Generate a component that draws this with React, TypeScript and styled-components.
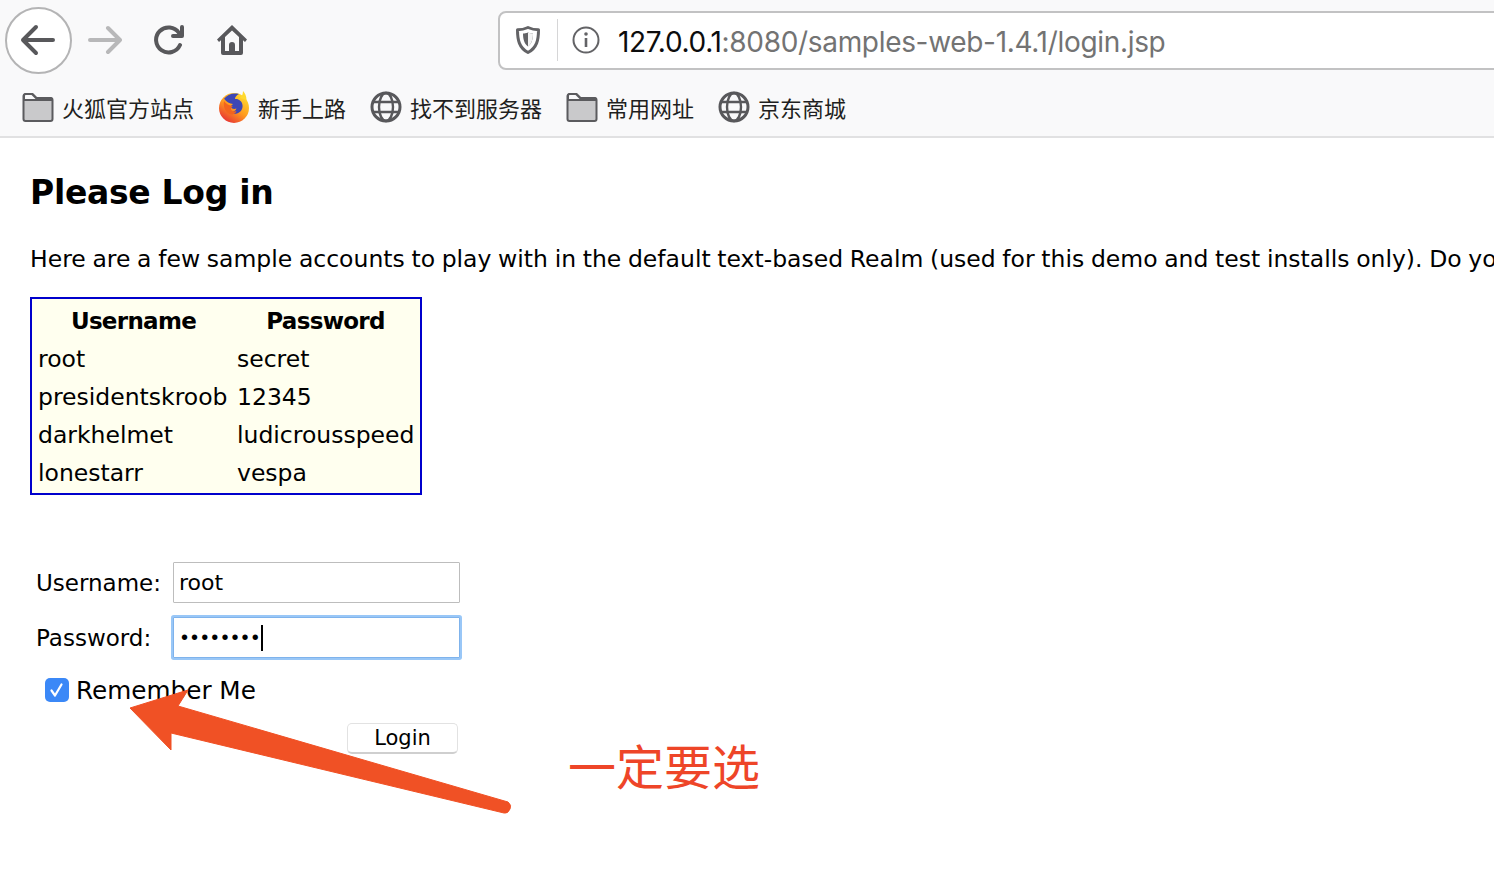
import styled, { createGlobalStyle } from "styled-components";

const accounts = [
  ["root", "secret"],
  ["presidentskroob", "12345"],
  ["darkhelmet", "ludicrousspeed"],
  ["lonestarr", "vespa"],
];

const bookmarks = [
  { icon: "folder", label: "火狐官方站点" },
  { icon: "firefox", label: "新手上路" },
  { icon: "globe", label: "找不到服务器" },
  { icon: "folder", label: "常用网址" },
  { icon: "globe", label: "京东商城" },
];

const FolderIcon = () => (
  <svg width="32" height="30" viewBox="0 0 32 30">
    <path
      d="M1.5 4a2 2 0 0 1 2-2h7l4 4h14a2 2 0 0 1 2 2v19a2 2 0 0 1-2 2h-25a2 2 0 0 1-2-2z"
      fill="#c9c9cb"
      stroke="#5b5b5e"
      strokeWidth="2"
      strokeLinejoin="round"
    />
    <path d="M2 8h28v-.5a2 2 0 0 0-2-1.500h-14l-4-4h-6.500a2 2 0 0 0-1.500 2z" fill="#f9f9fa" stroke="#5b5b5e" strokeWidth="2" strokeLinejoin="round" />
  </svg>
);

const GlobeIcon = () => (
  <svg width="32" height="32" viewBox="0 0 32 32" fill="none" stroke="#58585b" strokeWidth="3">
    <circle cx="16" cy="16" r="14" />
    <ellipse cx="16" cy="16" rx="7" ry="14" strokeWidth="2.4" />
    <path d="M3 11h26M3 21h26" strokeWidth="2.4" />
  </svg>
);

const FirefoxIcon = () => (
  <FoxSvg width="30" height="32" viewBox="0 0 30 32">
    <defs>
      <linearGradient id="foxBody" x1="0.85" y1="0.1" x2="0.25" y2="1">
        <stop offset="0" stopColor="#ffd92e" />
        <stop offset="0.5" stopColor="#ff9a1f" />
        <stop offset="1" stopColor="#e62f35" />
      </linearGradient>
    </defs>
    <circle cx="15" cy="17" r="15" fill="url(#foxBody)" />
    <path d="M24 0c2 2 3.500 5 3.500 9L21 7c2-2 3-4 3-7z" fill="#ffd92e" />
    <path d="M5 8C8 3.500 14 1.500 20 3c-2.500 1-4 3-4 5 3.500-.5 7 2 7.500 6 .5 4-2 7.500-5.500 8.500-3 .8-6 0-7.500-2 3 1 6 0 7-3-2 1-5 .5-5.500-1.500-.3-1.500 1-2 2-3-3-.5-7-2-9-5.500z" fill="#3d47b5" />
    <path d="M5 10c2 3 5 4.500 9 5-1.500 1-2.500 2-2 3.500.5 2 3.500 2.500 5.500 1.500-1 3-4 4-7 3C6 21 4 15 5 10z" fill="#f2641e" />
  </FoxSvg>
);

export default function App() {
  return (
    <>
      <GlobalStyle />
      <BrowserChrome>
        <NavRow>
          <BackButton>
            <svg width="36" height="32" viewBox="0 0 36 32" fill="none" stroke="#58585b" strokeWidth="4" strokeLinecap="round" strokeLinejoin="round">
              <path d="M33 16H3M16 3 3 16l13 13" />
            </svg>
          </BackButton>
          <ForwardIcon width="34" height="30" viewBox="0 0 34 30" fill="none" stroke="#b8b8b9" strokeWidth="4" strokeLinecap="round" strokeLinejoin="round">
            <path d="M2 15h30M20 3l12 12-12 12" />
          </ForwardIcon>
          <ReloadIcon width="32" height="32" viewBox="0 0 32 32" fill="none" stroke="#58585b" strokeWidth="4" strokeLinecap="round" strokeLinejoin="round">
            <path d="M26 21a12.500 12.500 0 1 1-1-12l2 2.500" />
            <path d="M28 3v9h-9" fill="none" />
          </ReloadIcon>
          <HomeIcon width="32" height="32" viewBox="0 0 32 32">
            <path d="M16 1 1 15.500l2 2.500 2-1.700V29a2 2 0 0 0 2 2h18a2 2 0 0 0 2-2V16.300l2 1.700 2-2.500z" fill="#58585b" />
            <path d="M16 6.500 9 13v14h4v-6a3 3 0 0 1 6 0v6h4V13z" fill="#f9f9fa" />
            <rect x="14.500" y="20" width="3" height="3" fill="#58585b" />
          </HomeIcon>
          <UrlBar>
            <svg width="24" height="28" viewBox="0 0 24 28">
              <path d="M12 1.500c4 1.800 7 2.300 10.500 2.300 0 10-1.500 18-10.500 22.700C3 21.800 1.500 13.800 1.500 3.800 5 3.800 8 3.300 12 1.500z" fill="none" stroke="#636366" strokeWidth="3" strokeLinejoin="round" />
              <path d="M12 6.500c2 .8 3.500 1 5 1.100 0 5-1 10-5 13-4-3-5-8-5-13 1.500-.1 3-.3 5-1.100z" fill="#636366" />
              <path d="M12 6.500c2 .8 3.500 1 5 1.100 0 5-1 10-5 13z" fill="#f4f4f4" />
            </svg>
            <UrlDivider />
            <svg width="28" height="28" viewBox="0 0 28 28" fill="none" stroke="#636366" strokeWidth="2">
              <circle cx="14" cy="14" r="12.500" />
              <path d="M14 12v9" strokeWidth="2.600" />
              <circle cx="14" cy="8" r="1.800" fill="#636366" stroke="none" />
            </svg>
            <UrlText>
              <UrlHost>127.0.0.1</UrlHost>:8080/samples-web-1.4.1/login.jsp
            </UrlText>
          </UrlBar>
        </NavRow>
        <BookmarkRow>
          {bookmarks.map((b) => (
            <Bookmark key={b.label}>
              {b.icon === "folder" && <FolderIcon />}
              {b.icon === "firefox" && <FirefoxIcon />}
              {b.icon === "globe" && <GlobeIcon />}
              <span>{b.label}</span>
            </Bookmark>
          ))}
        </BookmarkRow>
      </BrowserChrome>

      <Content>
        <Title>Please Log in</Title>
        <Intro>
          Here are a few sample accounts to play with in the default text-based Realm (used for this demo and test installs only). Do yo
        </Intro>
        <AccountTable>
          <thead>
            <tr>
              <th>Username</th>
              <th>Password</th>
            </tr>
          </thead>
          <tbody>
            {accounts.map((a) => (
              <tr key={a[0]}>
                <td>{a[0]}</td>
                <td>{a[1]}</td>
              </tr>
            ))}
          </tbody>
        </AccountTable>

        <LoginForm>
          <FieldRow>
            <FieldLabel>Username:</FieldLabel>
            <TextBox>root</TextBox>
          </FieldRow>
          <FieldRow>
            <FieldLabel>Password:</FieldLabel>
            <TextBox $focused>
              <Dots>••••••••</Dots>
              <Caret />
            </TextBox>
          </FieldRow>
          <RememberRow>
            <CheckBox>
              <svg width="16" height="16" viewBox="0 0 16 16" fill="none" stroke="#fff" strokeWidth="2.200" strokeLinecap="round" strokeLinejoin="round">
                <path d="M2.500 8.500 6 13.500 12.500 2.500" />
              </svg>
            </CheckBox>
            <span>Remember Me</span>
          </RememberRow>
          <ButtonRow>
            <LoginButton>Login</LoginButton>
          </ButtonRow>
        </LoginForm>
      </Content>

      <ArrowOverlay width="400" height="140" viewBox="0 0 400 140">
        <path
          d="M0 20 58 2 48 18 378 114Q382 117 380 121 378 126 374 125L41 45V62z"
          fill="#f05125"
          stroke="#f05125"
          strokeWidth="1"
          strokeLinejoin="round"
        />
      </ArrowOverlay>
      <Annotation>一定要选</Annotation>
    </>
  );
}

const GlobalStyle = createGlobalStyle`
  html, body {
    margin: 0;
    padding: 0;
    background: #fff;
    height: 892px;
    overflow: hidden;
  }
  body {
    font-family: "DejaVu Sans", Verdana, sans-serif;
    color: #000;
    position: relative;
  }
`;

const BrowserChrome = styled.header`
  height: 136px;
  background: #f9f9fa;
  border-bottom: 2px solid #e1e1e2;
  overflow: hidden;
`;

const NavRow = styled.div`
  display: flex;
  align-items: center;
  height: 80px;
  padding-left: 5px;
`;

const BackButton = styled.div`
  flex: none;
  box-sizing: border-box;
  width: 67px;
  height: 67px;
  border: 2px solid #b4b4b5;
  border-radius: 50%;
  background: #fff;
  display: flex;
  align-items: center;
  justify-content: center;
  padding-right: 2px;
`;

const ForwardIcon = styled.svg`
  flex: none;
  margin-left: 16px;
`;

const ReloadIcon = styled.svg`
  flex: none;
  margin-left: 32px;
`;

const HomeIcon = styled.svg`
  flex: none;
  margin-left: 30px;
`;

const UrlBar = styled.div`
  flex: none;
  box-sizing: border-box;
  width: 1100px;
  height: 59px;
  margin-left: 250px;
  border: 2px solid #c2c2c3;
  border-radius: 8px;
  background: #fff;
  display: flex;
  align-items: center;
  padding-left: 16px;
`;

const UrlDivider = styled.div`
  width: 1px;
  height: 42px;
  background: #d6d6d7;
  margin: 0 14px 0 17px;
`;

const UrlText = styled.div`
  margin-left: 18px;
  padding-top: 4px;
  font-family: "Inter", "Liberation Sans", sans-serif;
  font-size: 28px;
  letter-spacing: -0.32px;
  color: #737373;
  white-space: nowrap;
`;

const UrlHost = styled.span`
  color: #0c0c0d;
`;

const BookmarkRow = styled.nav`
  display: flex;
  align-items: center;
  gap: 24px;
  height: 54px;
  padding-left: 22px;
`;

const Bookmark = styled.div`
  display: flex;
  align-items: center;
  gap: 8px;
  font-family: "Noto Sans CJK SC", sans-serif;
  font-size: 22px;
  color: #1f1f21;
  white-space: nowrap;
`;

const FoxSvg = styled.svg`
  margin: 0 1px;
`;

const Content = styled.main`
  padding-left: 30px;
  overflow: hidden;
`;

const Title = styled.h1`
  margin: 30px 0 0;
  height: 50px;
  line-height: 50px;
  font-size: 33px;
  font-weight: 700;
  letter-spacing: -0.3px;
`;

const Intro = styled.p`
  margin: 26px 0 0;
  height: 30px;
  line-height: 30px;
  font-size: 23.5px;
  word-spacing: -0.8px;
  white-space: nowrap;
`;

const AccountTable = styled.table`
  margin-top: 23px;
  box-sizing: border-box;
  width: 392px;
  height: 198px;
  table-layout: fixed;
  border: 2px solid #0000cc;
  border-collapse: separate;
  border-spacing: 0;
  background: #ffffef;
  font-size: 23.5px;
  padding: 3px 6px 1px;

  th {
    font-size: 23px;
    letter-spacing: -0.7px;
    font-weight: 700;
    text-align: center;
    height: 38px;
    padding: 0;
  }

  td {
    height: 38px;
    padding: 0;
    white-space: nowrap;
  }

  th:first-child,
  td:first-child {
    box-sizing: border-box;
    width: 199px;
    padding-right: 8px;
  }
`;

const LoginForm = styled.form`
  margin: 67px 0 0 6px;
  width: 425px;
  font-size: 23px;
`;

const FieldRow = styled.div`
  display: flex;
  align-items: center;
  height: 41px;
  margin-bottom: 14px;
`;

const FieldLabel = styled.label`
  width: 137px;
  flex: none;
`;

const TextBox = styled.div<{ $focused?: boolean }>`
  flex: none;
  box-sizing: border-box;
  width: 287px;
  height: 41px;
  background: #fff;
  border: 1px solid ${(p) => (p.$focused ? "#7fb3ec" : "#bdbdbd")};
  box-shadow: ${(p) => (p.$focused ? "0 0 0 2px #99c7f7" : "none")};
  border-radius: 1px;
  display: flex;
  align-items: center;
  padding: 0 5px;
  font-size: 22px;
`;

const Dots = styled.span`
  margin-left: 2px;
  font-family: "Liberation Sans", sans-serif;
  font-size: 20px;
  letter-spacing: 3.100px;
`;

const Caret = styled.span`
  display: inline-block;
  width: 2px;
  height: 26px;
  margin-left: -1px;
  background: #000;
`;

const RememberRow = styled.div`
  display: flex;
  align-items: center;
  gap: 7px;
  height: 30px;
  margin: 17px 0 0 9px;
  font-size: 24.7px;
`;

const CheckBox = styled.div`
  flex: none;
  box-sizing: border-box;
  width: 24px;
  height: 24px;
  border-radius: 5px;
  background: #3b88f7;
  display: flex;
  align-items: center;
  justify-content: center;
`;

const ButtonRow = styled.div`
  display: flex;
  justify-content: flex-end;
  margin-top: 18px;
  padding-right: 3px;
`;

const LoginButton = styled.div`
  box-sizing: border-box;
  width: 111px;
  height: 31px;
  border: 1px solid #e2e2e2;
  border-bottom: 2px solid #cfcfcf;
  border-radius: 5px;
  background: #fff;
  display: flex;
  align-items: center;
  justify-content: center;
  font-size: 21px;
`;

const ArrowOverlay = styled.svg`
  position: absolute;
  left: 130px;
  top: 688px;
  overflow: visible;
`;

const Annotation = styled.div`
  position: absolute;
  left: 568px;
  top: 729px;
  font-family: "Noto Sans CJK SC", sans-serif;
  font-size: 48px;
  font-weight: 400;
  line-height: 70px;
  color: #ee4528;
  white-space: nowrap;
`;
